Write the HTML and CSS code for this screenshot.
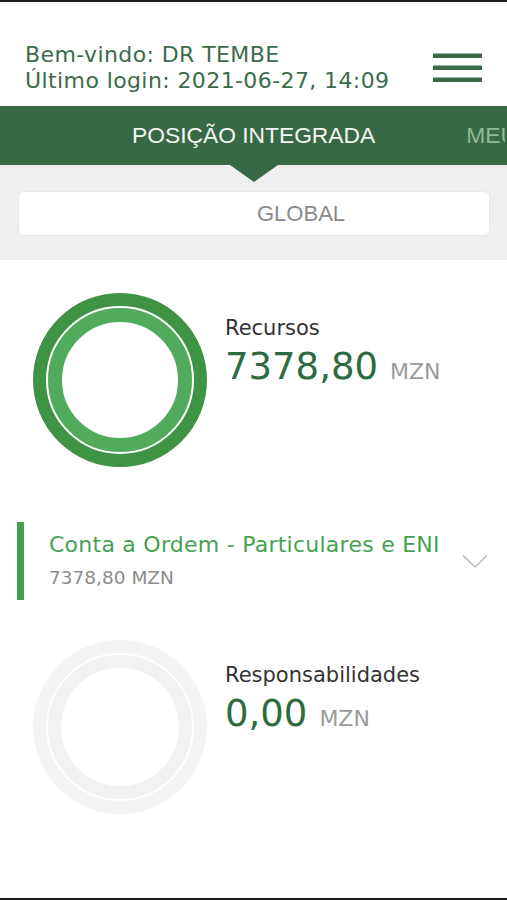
FILE: index.html
```html
<!DOCTYPE html>
<html lang="pt">
<head>
<meta charset="utf-8">
<title>Posição Integrada</title>
<link rel="stylesheet" href="styles.css">
</head>
<body>
<div class="page">
  <div class="edge"></div>
  <header class="header">
    <div class="welcome">
      <div>Bem-vindo: DR TEMBE</div>
      <div>Último login: 2021-06-27, 14:09</div>
    </div>
    <svg class="menu" width="49" height="29" viewBox="0 0 49 29" aria-label="menu">
      <rect x="0" y="0.5" width="49" height="4.5" fill="#3b6a49"/>
      <rect x="0" y="12.5" width="49" height="4.5" fill="#3b6a49"/>
      <rect x="0" y="24.5" width="49" height="4.5" fill="#3b6a49"/>
    </svg>
  </header>
  <nav class="tabs">
    <div class="tab active">POSIÇÃO INTEGRADA</div>
    <div class="tab next">MEUS PRODUTOS</div>
  </nav>
  <section class="filter">
    <div class="select">GLOBAL</div>
  </section>
  <main class="content">
    <div class="summary">
      <svg class="ring" width="174" height="174" viewBox="0 0 174 174">
        <circle cx="87" cy="87" r="80.5" fill="none" stroke="#3e9345" stroke-width="13"/>
        <circle cx="87" cy="87" r="65" fill="none" stroke="#50ab5c" stroke-width="14"/>
      </svg>
      <div class="figures">
        <div class="label">Recursos</div>
        <div class="amount"><span class="value">7378,80</span><span class="cur">MZN</span></div>
      </div>
    </div>
    <div class="account">
      <div class="bar"></div>
      <div class="acc-text">
        <div class="acc-title">Conta a Ordem - Particulares e ENI</div>
        <div class="acc-sub">7378,80 MZN</div>
      </div>
      <svg class="chev" width="26" height="15" viewBox="0 0 26 15">
        <polyline points="1,1.5 13,13 25,1.5" fill="none" stroke="#bdbdbd" stroke-width="1.6"/>
      </svg>
    </div>
    <div class="summary second">
      <svg class="ring" width="174" height="174" viewBox="0 0 174 174">
        <circle cx="87" cy="87" r="80.5" fill="none" stroke="#f4f4f4" stroke-width="13"/>
        <circle cx="87" cy="87" r="65.5" fill="none" stroke="#f2f2f2" stroke-width="13"/>
      </svg>
      <div class="figures">
        <div class="label">Responsabilidades</div>
        <div class="amount"><span class="value">0,00</span><span class="cur">MZN</span></div>
      </div>
    </div>
  </main>
  <div class="edge"></div>
</div>
</body>
</html>
```
FILE: styles.css
```css
html, body {
  margin: 0;
  padding: 0;
  background: #ffffff;
}
.page {
  width: 507px;
  min-height: 900px;
  display: flex;
  flex-direction: column;
  font-family: "DejaVu Sans", Verdana, sans-serif;
  overflow: hidden;
}
.edge {
  height: 2px;
  background: #1e1e1e;
  flex: none;
}
.header {
  height: 104px;
  box-sizing: border-box;
  padding: 40px 25px 0 25px;
  display: flex;
  justify-content: space-between;
  align-items: flex-start;
}
.welcome {
  font-size: 22px;
  line-height: 26px;
  letter-spacing: 0.4px;
  color: #3c6b4b;
}
.menu {
  margin-top: 11px;
}
.tabs {
  height: 59px;
  background: #386947;
  display: flex;
  align-items: center;
  gap: 91px;
  padding-left: 132px;
  white-space: nowrap;
  position: relative;
  overflow: hidden;
  font-family: "Liberation Sans", Arial, sans-serif;
  font-size: 22.8px;
}
.tab {
  color: #8fb99b;
}
.tab.active {
  color: #f2f5f2;
}
.tab.next {
  flex: none;
  width: 39px;
  overflow: hidden;
}
.filter {
  background: #efefef;
  height: 95px;
  box-sizing: border-box;
  padding: 0 17px 0 18px;
  display: flex;
  flex-direction: column;
}
.filter::before {
  content: "";
  align-self: flex-start;
  margin-left: 212px;
  width: 0;
  height: 0;
  border-left: 24px solid transparent;
  border-right: 24px solid transparent;
  border-top: 17px solid #386947;
  margin-bottom: 9px;
}
.select {
  height: 45px;
  box-sizing: border-box;
  background: #ffffff;
  border: 1px solid #e8e8e8;
  border-radius: 6px;
  display: flex;
  align-items: center;
  padding-left: 238px;
  font-family: "Liberation Sans", Arial, sans-serif;
  font-size: 22px;
  color: #8a8a8a;
}
.content {
  flex: 1;
}
.summary {
  display: flex;
  align-items: flex-start;
  gap: 18px;
  padding: 33px 0 0 33px;
}
.summary.second {
  padding-top: 40px;
}
.ring {
  flex: none;
  display: block;
}
.figures {
  margin-top: 23px;
}
.label {
  font-size: 21px;
  line-height: 24px;
  color: #333333;
}
.amount {
  margin-top: 5px;
  line-height: 44px;
  white-space: nowrap;
}
.value {
  font-size: 37px;
  color: #2f6b42;
}
.cur {
  font-size: 22px;
  color: #9a9a9a;
  margin-left: 12px;
}
.account {
  margin-top: 55px;
  height: 78px;
  display: flex;
  align-items: center;
  padding-left: 17px;
  padding-right: 19px;
}
.bar {
  width: 7px;
  align-self: stretch;
  background: #43a04e;
  flex: none;
}
.acc-text {
  flex: 1;
  padding-left: 25px;
  align-self: flex-start;
  padding-top: 9px;
}
.acc-title {
  font-size: 22px;
  line-height: 28px;
  letter-spacing: 0.25px;
  color: #45a252;
  white-space: nowrap;
}
.acc-sub {
  margin-top: 7px;
  font-size: 18.5px;
  line-height: 24px;
  color: #8c8c8c;
}
.chev {
  flex: none;
  display: block;
}
```
